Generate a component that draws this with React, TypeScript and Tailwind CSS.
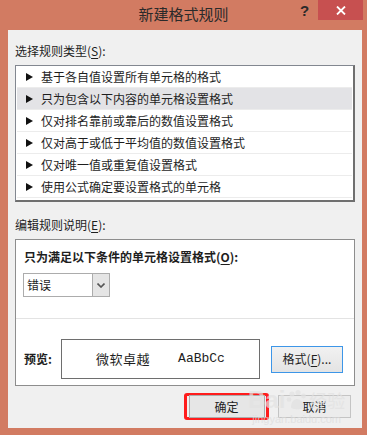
const cjk = { fontFamily: '"Noto Sans CJK SC", "Noto Sans", sans-serif' }

const ruleTypes = [
  '基于各自值设置所有单元格的格式',
  '只为包含以下内容的单元格设置格式',
  '仅对排名靠前或靠后的数值设置格式',
  '仅对高于或低于平均值的数值设置格式',
  '仅对唯一值或重复值设置格式',
  '使用公式确定要设置格式的单元格',
]

function Arrow() {
  return (
    <svg width="8" height="8" viewBox="0 0 8 8" className="shrink-0">
      <polygon points="0,0 7,4 0,8" fill="#111" />
    </svg>
  )
}

export default function App() {
  return (
    <div
      className="relative w-[367px] h-[435px] bg-[#d27b62] flex flex-col overflow-hidden text-[#1e1e1e]"
      style={cjk}
    >
      {/* title bar */}
      <div className="relative h-[30px] flex items-center justify-center">
        <span className="text-[15px] leading-none text-[#2a2a2a] -mt-[4px]">新建格式规则</span>
        <span className="absolute left-[300px] top-[2px] text-[15px] font-bold text-[#2a2a2a] leading-[18px]" style={{ fontFamily: '"Liberation Sans", sans-serif' }}>?</span>
        <div className="absolute left-[318px] top-0 w-[45px] h-[20px] bg-[#c75050] flex items-center justify-center">
          <svg width="10" height="9" viewBox="0 0 10 9">
            <path d="M1 0.5 L9 8.5 M9 0.5 L1 8.5" stroke="#fff" strokeWidth="1.8" />
          </svg>
        </div>
      </div>

      {/* client area */}
      <div className="ml-[8px] w-[354px] h-[398px] bg-[#f0f0f0] px-[7px] flex flex-col text-[12px]">
        <div className="mt-[13px] h-[16px] leading-[16px]">
          选择规则类型(<span className="underline underline-offset-2">S</span>):
        </div>

        <div className="mt-[6px] h-[137px] bg-white border border-[#828790] border-r-2 border-b-2 border-r-[#6f6f6f] border-b-[#6f6f6f] px-[1px] pt-0">
          {ruleTypes.map((t, i) => (
            <div
              key={t}
              className={
                'h-[22px] flex items-center gap-[7px] pl-[9px] border-b border-[#ececec] ' +
                (i === 1 ? 'bg-[#e3e3e6]' : '')
              }
            >
              <Arrow />
              <span className="leading-none">{t}</span>
            </div>
          ))}
        </div>

        <div className="mt-[15px] h-[16px] leading-[16px]">
          编辑规则说明(<span className="underline underline-offset-2">E</span>):
        </div>

        <div className="mt-[6px] h-[147px] bg-white border border-[#8d8d8d] flex flex-col">
          <div className="mt-[9px] ml-[8px] h-[16px] leading-[16px] font-bold">
            只为满足以下条件的单元格设置格式(<span className="underline underline-offset-2">O</span>):
          </div>

          <div className="mt-[8px] ml-[7px] w-[87px] h-[24px] border border-[#acacac] flex items-center">
            <span className="pl-[3px] flex-1">错误</span>
            <div className="w-[17px] h-[22px] bg-[#e5e5e5] border-l border-[#acacac] flex items-center justify-center">
              <svg width="8" height="5" viewBox="0 0 8 5">
                <path d="M0.5 0.5 L4 4 L7.5 0.5" stroke="#555" strokeWidth="1.6" fill="none" />
              </svg>
            </div>
          </div>

          <div className="mt-[21px] h-px bg-[#e3e3e3]" />

          <div className="mt-[20px] ml-[8px] flex items-center">
            <span className="font-bold w-[37px]">预览:</span>
            <div className="w-[199px] h-[40px] border border-[#6e6e6e] flex items-center justify-center gap-[28px] text-[13px]">
              <span className="tracking-[0.5px]">微软卓越</span>
              <span style={{ fontFamily: '"Liberation Mono", monospace' }}>AaBbCc</span>
            </div>
            <button className="ml-[11px] w-[72px] h-[27px] border border-[#3d96e8] bg-gradient-to-b from-[#f1f1f1] to-[#e4e4e4] text-[12px] flex items-center justify-center">
              格式(<span className="underline underline-offset-2">F</span>)...
            </button>
          </div>
        </div>

        <div className="mt-[7px] flex items-center justify-end pr-[4px] gap-[9px]">
          <div className="w-[85px] h-[27px] border-[3px] border-[#ff1c1c] rounded-[3px] flex items-center justify-center">
            <button className="w-[76px] h-[23px] border border-[#acacac] bg-[#e6e6e6] text-[12px]">确定</button>
          </div>
          <button className="w-[73px] h-[23px] border border-[#c4c4c4] bg-[#ececec] text-[12px]">取消</button>
        </div>
      </div>

      {/* watermark */}
      <div className="absolute left-[248px] top-[388px] pointer-events-none flex flex-col items-center opacity-70">
        <div className="flex items-center text-[24px] font-bold text-[#e2e2e2] leading-none" style={{ fontFamily: '"Liberation Sans", sans-serif' }}>
          <span>Bai</span>
          <svg width="22" height="22" viewBox="0 0 22 22" className="mx-[1px]">
            <circle cx="6" cy="5" r="2.6" fill="#e2e2e2" />
            <circle cx="12" cy="3.5" r="2.6" fill="#e2e2e2" />
            <circle cx="17.5" cy="7" r="2.4" fill="#e2e2e2" />
            <circle cx="3" cy="10.5" r="2.3" fill="#e2e2e2" />
            <path d="M5 18 C5 12 9 10 11 10 C14 10 18 13 18 18 C18 21 5 21 5 18 Z" fill="#e2e2e2" />
          </svg>
          <span className="text-[18px] font-normal" style={cjk}>经验</span>
        </div>
        <span className="text-[11px] text-[#dcdcdc] leading-none mt-[2px]" style={{ fontFamily: '"Liberation Sans", sans-serif' }}>jingyan.baidu.com</span>
      </div>
    </div>
  )
}
